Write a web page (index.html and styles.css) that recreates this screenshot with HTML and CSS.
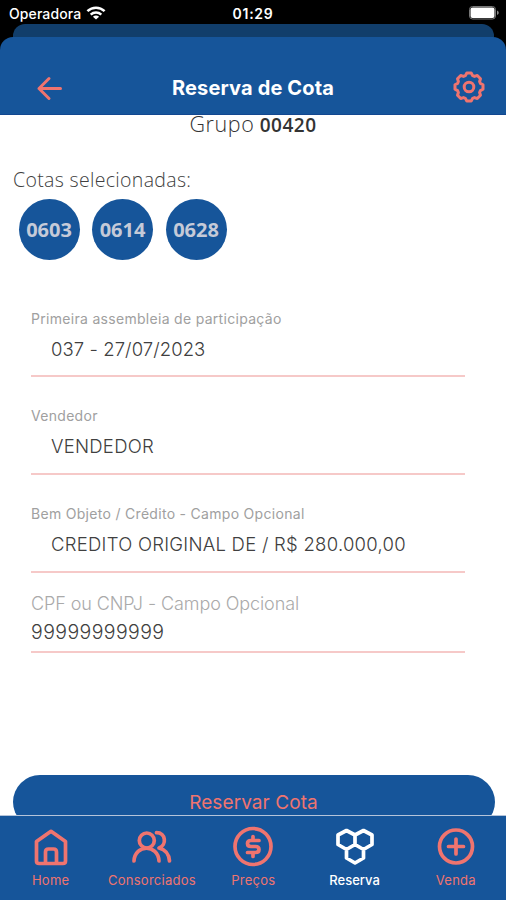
FILE: index.html
```html
<!DOCTYPE html>
<html lang="pt-BR">
<head>
<meta charset="utf-8">
<title>Reserva de Cota</title>
<link rel="stylesheet" href="styles.css">
</head>
<body>
<div class="screen">
  <div class="status">
    <div class="carrier"><span>Operadora</span>
      <svg width="20" height="14" viewBox="0 0 20 14" fill="none" stroke="#fff" stroke-width="2.5"><path d="M1.4 5.2C6.3.6 13.7.6 18.6 5.2"/><path d="M4.7 8.7c3-2.8 7.6-2.8 10.6 0"/><path d="M10 13.4 6.9 10.7c1.8-1.5 4.4-1.5 6.2 0z" fill="#fff" stroke="none"/></svg>
    </div>
    <span class="clock">01:29</span>
    <div class="battery"><svg width="31" height="14" viewBox="0 0 31 14"><rect x=".5" y=".5" width="26" height="12.500" rx="3" fill="none" stroke="#777"/><rect x="1.500" y="1.500" width="24" height="10.500" rx="2" fill="#fff"/><path d="M28 4.500c2.300.8 2.300 3.700 0 4.500z" fill="#888"/></svg></div>
  </div>
  <div class="deck"><div class="behind"></div></div>
  <div class="deck"><header class="header">
    <svg class="back" width="28" height="28" viewBox="0 0 28 28" fill="none" stroke="#ef746f" stroke-width="3" stroke-linecap="round" stroke-linejoin="round"><path d="M25.500 14.500H4M14 4.500l-10 10 10 10"/></svg>
    <h1>Reserva de Cota</h1>
    <svg class="gear" width="32" height="32" viewBox="-16 -16 32 32" fill="none" stroke="#ef746f" stroke-width="3" stroke-linejoin="round"><path d="M2.200-14 3.600-11.400 5.500-10.600 8.300-11.500 11.500-8.300 10.600-5.500 11.400-3.600 14-2.200V2.200L11.400 3.600 10.600 5.500 11.500 8.300 8.300 11.500 5.500 10.600 3.600 11.400 2.200 14H-2.200L-3.600 11.400-5.500 10.600-8.300 11.500-11.500 8.300-10.600 5.500-11.400 3.600-14 2.200V-2.200L-11.400-3.600-10.600-5.500-11.500-8.300-8.300-11.500-5.500-10.600-3.600-11.400-2.200-14z"/><circle r="4.800"/></svg>
  </header></div>
  <main class="content">
    <p class="group"><span class="gname">Grupo</span> <b>00420</b></p>
    <p class="selected">Cotas selecionadas:</p>
    <div class="chips"><span>0603</span><span>0614</span><span>0628</span></div>
    <div class="field first"><label>Primeira assembleia de participação</label><div class="value date">037 - 27/07/2023</div></div>
    <div class="field"><label>Vendedor</label><div class="value">VENDEDOR</div></div>
    <div class="field"><label>Bem Objeto / Crédito - Campo Opcional</label><div class="value">CREDITO ORIGINAL DE / R$ 280.000,00</div></div>
    <div class="field plain"><label>CPF ou CNPJ - Campo Opcional</label><div class="value">99999999999</div></div>
    <button class="submit">Reservar Cota</button>
  </main>
  <nav class="tabs">
    <a><svg width="40" height="40" viewBox="0 0 40 40"><path d="M5.500 14.500 20 4.300 34.500 14.500V34q0 2.500-2.500 2.500H8Q5.500 36.500 5.500 34z"/><path d="M14.500 36V25q0-3 3-3h5q3 0 3 3v11"/></svg><span>Home</span></a>
    <a><svg width="40" height="40" viewBox="0 0 40 40"><circle cx="14.800" cy="13.500" r="7.500"/><path d="M2 34c1-17 24-17 25 0M24.500 5.700c9.500 0 10.500 12.300 2.500 15.300 6 1.500 10 6 10.500 13"/></svg><span>Consorciados</span></a>
    <a><svg width="40" height="40" viewBox="0 0 40 40"><circle cx="20" cy="19.500" r="18"/><path d="M26 13.500h-8q-3.500 0-3.500 3t3.500 3h4.500q3.500 0 3.500 3t-3.500 3h-8M20 9.500v4M20 25.500v4"/></svg><span>Preços</span></a>
    <a class="active"><svg width="40" height="40" viewBox="0 0 40 40"><path d="m11.500 3.500 8.500 4.500v9.500l-8.500 5-8.500-5V8zM28.500 3.500 37 8v9.500l-8.500 5-8.500-5V8zM20 17.500l8.500 5V31L20 36l-8.500-5v-8.500z"/></svg><span>Reserva</span></a>
    <a><svg width="40" height="40" viewBox="0 0 40 40"><circle cx="20" cy="19.500" r="16.500"/><path d="M20 12v15M12.500 19.500h15"/></svg><span>Venda</span></a>
  </nav>
</div>
</body>
</html>
```
FILE: styles.css
```css
* { box-sizing: border-box; }
body { margin: 0; background: #fff; font-family: Inter, "Liberation Sans", sans-serif; }
.screen { width: 506px; height: 900px; overflow: hidden; display: flex; flex-direction: column; background: #fff; }
.screen svg { display: block; flex: none; overflow: visible; }
.status { height: 24px; flex: none; background: #000; color: #fff; display: grid; grid-template-columns: 1fr auto 1fr; align-items: center; padding: 3px 6px 0 9px; }
.status > * { height: 21px; line-height: 21px; }
.carrier { display: flex; align-items: center; gap: 5px; font-size: 14px; font-weight: 500; letter-spacing: .1px; }
.carrier svg { margin-top: -2px; }
.clock { font-size: 14px; font-weight: 600; letter-spacing: .7px; margin-left: -3px; }
.battery { display: flex; justify-content: flex-end; align-items: center; padding-bottom: 1px; }
.deck { flex: none; background: #000; }
.behind { height: 13px; background: #113e6b; border-radius: 12px 12px 0 0; margin: 0 12px 0 13px; }
.header { height: 78px; display: grid; grid-template-columns: 1fr auto 1fr; align-items: center; padding: 24px 21px 0 35px; color: #fff; background: #16559a; border-radius: 13px 13px 0 0; border-bottom: 1px solid #124790; }
.header h1 { margin: 0 0 0 -14px; font-size: 20px; line-height: 26px; font-weight: 700; white-space: nowrap; letter-spacing: .15px; }
.gear { justify-self: end; margin-top: -1px; }
.content { height: 700px; flex: none; }
.content p { margin: 0; }
.group { font-family: "Open Sans", sans-serif; text-align: center; height: 51px; line-height: 18px; font-size: 19px; color: #333; letter-spacing: .35px; }
.group b { font-weight: 600; letter-spacing: .5px; }
.gname { font-size: 21.500px; font-weight: 300; letter-spacing: .6px; }
.selected { font-family: "Open Sans", sans-serif; font-weight: 300; font-size: 19.500px; line-height: 28px; letter-spacing: .33px; color: #404040; padding-left: 13px; }
.chips { display: flex; gap: 12.5px; padding: 5px 0 0 18.500px; height: 111px; }
.chips span { width: 61px; height: 61px; border-radius: 50%; background: #16559a; color: #c5cad8; font: 700 20px/62px "Open Sans", sans-serif; text-align: center; }
.field { margin: 0 41px 0 31px; height: 98px; border-bottom: 2px solid #f6c9c8; padding-top: 29px; }
.field label { display: block; font-size: 14px; line-height: 20px; letter-spacing: .3px; color: #a0a0a0; font-weight: 400; white-space: nowrap; }
.value { font-size: 18.500px; line-height: 24px; letter-spacing: .26px; padding: 8px 0 0 20px; color: #404040; font-weight: 300; white-space: nowrap; }
.date { letter-spacing: .08px; }
.field.first { height: 72px; padding-top: 4px; }
.field.plain { height: 80px; padding-top: 19px; }
.field.plain label { font-size: 18px; line-height: 24px; letter-spacing: -.09px; color: #aaa; font-weight: 300; }
.field.plain .value { font-size: 19.500px; letter-spacing: .4px; padding: 4px 0 0; }
.submit { display: block; width: 482px; height: 54px; border: 0; border-radius: 27px; margin: 122px 12px 0 12.500px; padding: 0; background: #16559a; color: #ef746f; font: 400 19px/56px Inter, sans-serif; letter-spacing: .08px; }
.tabs { position: relative; height: 85px; flex: none; background: #16559a; border-top: 1px solid #b5c4da; display: grid; grid-template-columns: repeat(5, 101.300px); }
.tabs a { display: flex; flex-direction: column; align-items: center; padding-top: 10.500px; color: #ef746f; font-size: 13px; line-height: 18px; letter-spacing: .25px; }
.tabs svg { fill: none; stroke: currentColor; stroke-width: 3.700; stroke-linecap: round; stroke-linejoin: round; margin-bottom: 4.500px; }
.tabs .active { color: #fff; font-weight: 500; letter-spacing: 0; }
```
